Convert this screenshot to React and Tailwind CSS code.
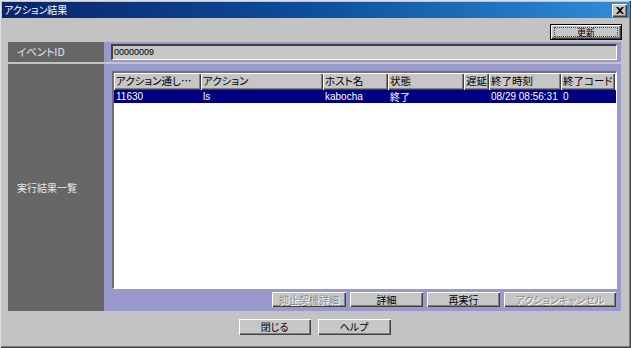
const JP = "font-['Noto_Sans_CJK_JP','Liberation_Sans',sans-serif] [font-feature-settings:'palt']";
const LAT = "font-['Liberation_Sans','Noto_Sans_CJK_JP',sans-serif]";
const RAISED =
  "bg-[#c6c6c6] shadow-[inset_1px_1px_#ffffff,inset_-1px_-1px_#404040,inset_-2px_-2px_#808080]";

const COLS = [
  ["アクション通し…", 87],
  ["アクション", 122],
  ["ホスト名", 65],
  ["状態", 76],
  ["遅延", 25],
  ["終了時刻", 72],
  ["終了コード", 54],
];
const ROW = ["11630", "ls", "kabocha", "終了", "", "08/29 08:56:31", "0"];

function Btn({ w, children, disabled }) {
  return (
    <div
      className={`${RAISED} ${JP} flex h-[15px] items-center justify-center text-[10px] leading-none ${
        disabled ? "text-[#8a8a8a] [text-shadow:1px_1px_#ffffff]" : "text-black"
      }`}
      style={{ width: w }}
    >
      {children}
    </div>
  );
}

export default function App() {
  return (
    <div className="h-[348px] w-[631px] bg-[#c3c3c3] p-[2px] shadow-[inset_1px_1px_#e0e0e0,inset_-1px_-1px_#404040,inset_-2px_-2px_#808080]">
      {/* タイトルバー */}
      <div className="flex h-[16px] items-center justify-between bg-gradient-to-r from-[#0a246a] via-[#0d4ea0] to-[#2f8ed8] pl-[2px] pr-[2px]">
        <span className={`${JP} text-[10px] leading-none text-white`}>アクション結果</span>
        <div className={`${RAISED} flex h-[13px] w-[15px] items-center justify-center`}>
          <svg width="8" height="7" viewBox="0 0 8 7">
            <path d="M0 0h2l2 2 2-2h2L5 3.5 8 7H6L4 5 2 7H0l3-3.5z" fill="#000" />
          </svg>
        </div>
      </div>

      <div className="flex justify-end pr-[7px] pt-[6px]">
        <div className="border border-black">
          <div className={`${RAISED} flex h-[14px] w-[70px] items-center justify-center px-[3px] py-[2px]`}>
            <div className={`${JP} flex h-full w-full items-center justify-center border border-dotted border-[#444] text-[9px] leading-none`}>
              更新
            </div>
          </div>
        </div>
      </div>

      <div className="flex flex-col gap-[2px] pl-[6px] pt-[2px]">
        {/* イベントID */}
        <div className="flex h-[20px]">
          <div className={`${JP} flex w-[96px] items-center bg-[#666666] pl-[9px] text-[10.5px] text-[#e6e6e6]`}>
            イベントID
          </div>
          <div className="w-[517px] bg-[#9999cc] pb-[2px] pl-[7px] pr-[4px] pt-[2px]">
            <div className={`${LAT} flex h-[16px] items-center border-l-2 border-t-2 border-b border-r border-l-[#404040] border-t-[#404040] border-b-white border-r-white bg-[#c6c6c6] pl-[1px] text-[9px] text-black`}>
              00000009
            </div>
          </div>
        </div>

        {/* 実行結果一覧 */}
        <div className="flex h-[247px]">
          <div className={`${JP} flex w-[96px] items-center bg-[#666666] pl-[9px] text-[10px] text-[#e6e6e6]`}>
            実行結果一覧
          </div>
          <div className="flex w-[517px] flex-col bg-[#9999cc] pb-[4px] pl-[8px] pr-[4px] pt-[7px]">
            <div className="h-[218px] border-l-2 border-t-2 border-b border-r border-l-[#707070] border-t-[#707070] border-b-white border-r-white bg-white">
              <div className="flex h-[17px]">
                {COLS.map(([t, w]) => (
                  <div
                    key={t}
                    className={`${RAISED} ${JP} flex items-center overflow-hidden whitespace-nowrap pl-[2px] text-[10.5px] leading-none text-black`}
                    style={{ width: w }}
                  >
                    {t}
                  </div>
                ))}
              </div>
              <div className="flex h-[13px] bg-[#000080]">
                {COLS.map(([t, w], i) => (
                  <div
                    key={t}
                    className={`${/[a-z0-9]/.test(ROW[i]) ? LAT : JP} flex items-center whitespace-nowrap pl-[2px] text-[10px] leading-none text-white`}
                    style={{ width: w }}
                  >
                    {ROW[i]}
                  </div>
                ))}
              </div>
            </div>
            <div className="mt-[3px] flex justify-end gap-[4px] pr-[1px]">
              <Btn w={74} disabled>抑止契機詳細</Btn>
              <Btn w={73}>詳細</Btn>
              <Btn w={73}>再実行</Btn>
              <Btn w={112} disabled>アクションキャンセル</Btn>
            </div>
          </div>
        </div>
      </div>

      <div className="mt-[8px] flex justify-center gap-[7px] pr-[2px]">
        <div className={`${RAISED} ${JP} flex h-[16px] w-[72px] items-center justify-center text-[10px] leading-none`}>閉じる</div>
        <div className={`${RAISED} ${JP} flex h-[16px] w-[73px] items-center justify-center text-[10px] leading-none`}>ヘルプ</div>
      </div>
    </div>
  );
}
